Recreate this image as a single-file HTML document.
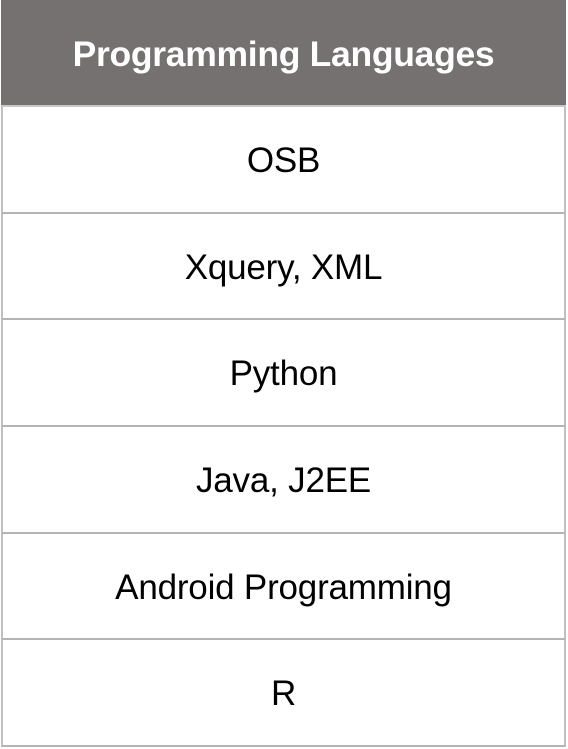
<!DOCTYPE html>
<html><head><style>
html,body{margin:0;padding:0;background:#fff;width:568px;height:749px;overflow:hidden}
.t{position:absolute;left:1px;top:0;width:565px;font-family:"Liberation Sans",Calibri,sans-serif}
.h{height:107px;background:#767171;color:#fff;font-weight:bold;font-size:35.5px;display:flex;align-items:center;justify-content:center;border-bottom:2px solid #c8c8c8;box-sizing:border-box;letter-spacing:-0.3px;padding-top:3px}
.r{height:106.7px;box-sizing:border-box;border-left:2px solid #c0c0c0;border-right:2px solid #c0c0c0;border-bottom:2px solid #b4b4b4;display:flex;align-items:center;justify-content:center;font-size:35px;color:#000;letter-spacing:-0.2px;padding-top:3px}
</style></head><body>
<div class="t">
<div class="h">Programming Languages</div>
<div class="r">OSB</div>
<div class="r">Xquery, XML</div>
<div class="r">Python</div>
<div class="r">Java, J2EE</div>
<div class="r">Android Programming</div>
<div class="r">R</div>
</div>
</body></html>
